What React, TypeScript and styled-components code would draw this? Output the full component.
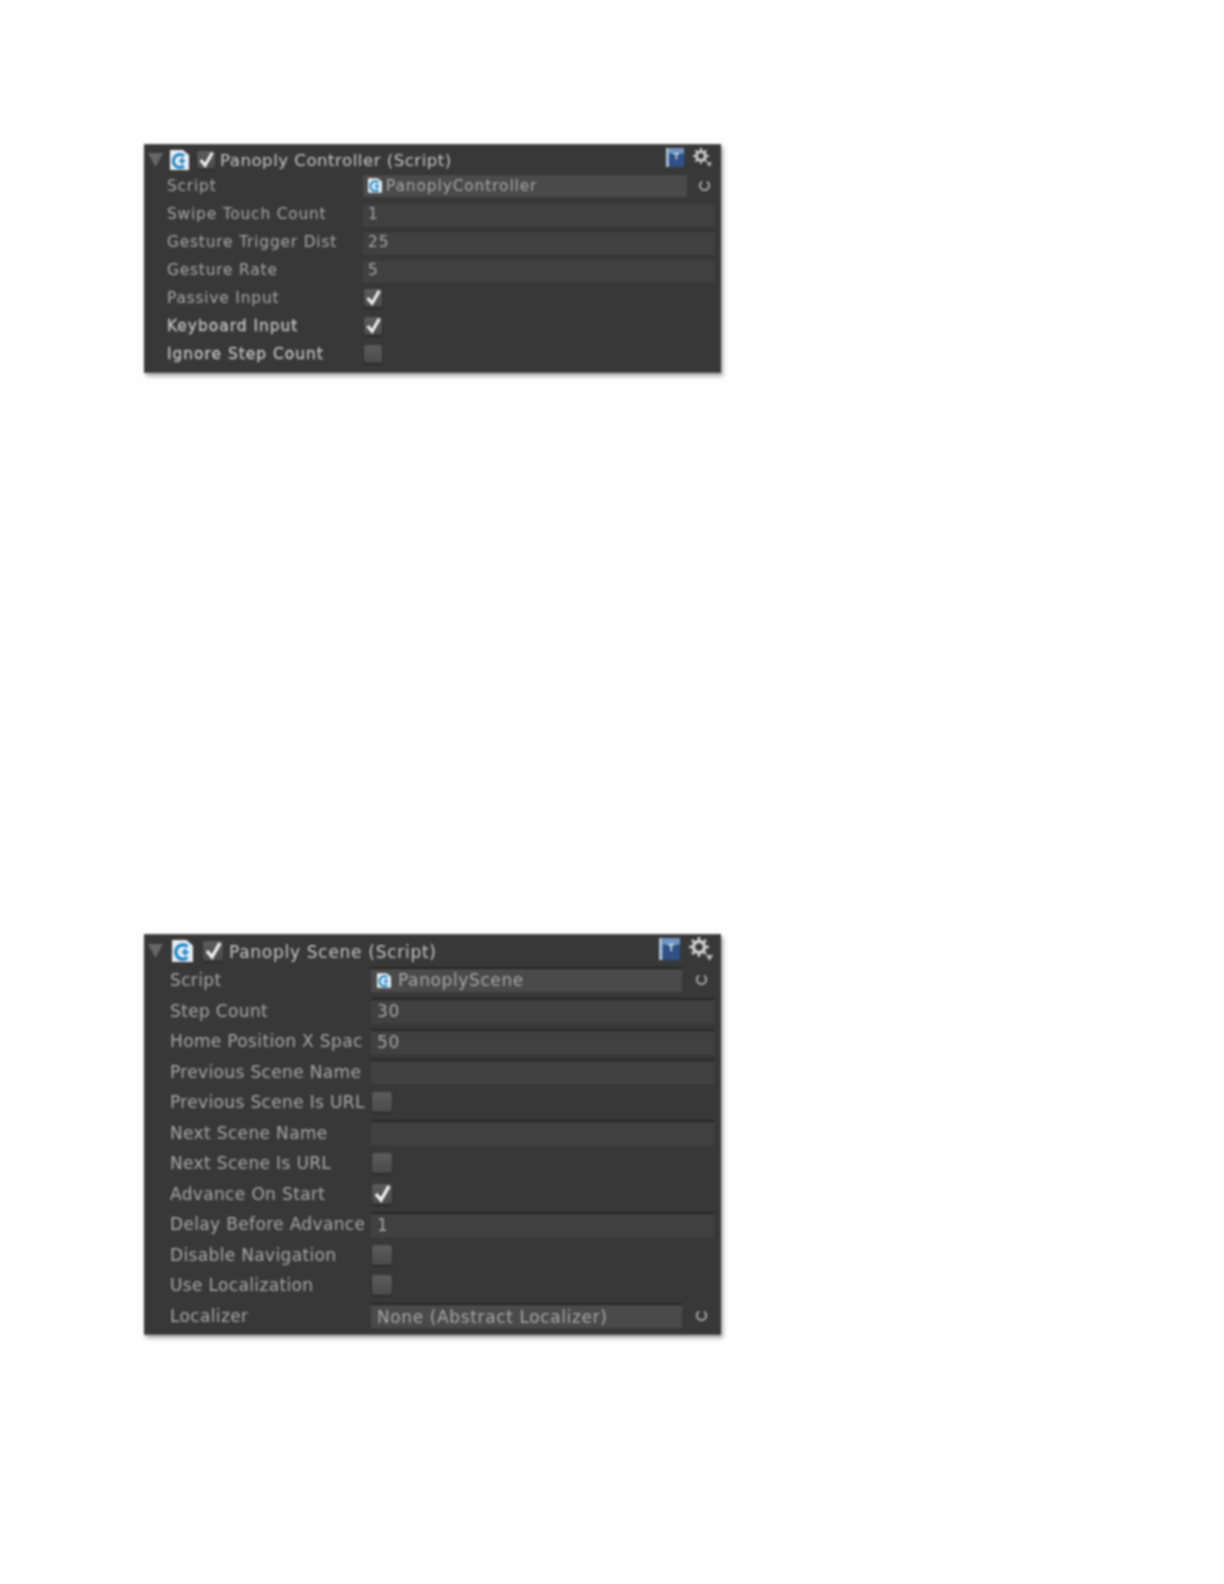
import React from "react";
import styled, { createGlobalStyle } from "styled-components";

const Global = createGlobalStyle`
  html, body { margin: 0; padding: 0; background: #fefefe; }
  #root { width: 1224px; height: 1584px; overflow: hidden; }
`;

type Size = {
  headerH: number; rowH: number; labelPad: number; labelCol: number; endPad: number;
  font: number; titleFont: number; titleSpacing: number; titleLead: number; spacing: number; boldSpacing: number;
  fieldSpacing: number; fieldH: number; fieldPad: number; objectGap: number; bottom: number;
  pickerCol: number; box: number; iconH: number; book: number; gear: number; toolGap: number; toolEnd: number;
};

const small: Size = { headerH: 28, rowH: 28, labelPad: 23, labelCol: 196, endPad: 6, font: 15.4, titleFont: 16.6, titleSpacing: 0.5, titleLead: -2, spacing: 0.82, boldSpacing: 1.02, fieldSpacing: 0.9, fieldH: 23, fieldPad: 5, objectGap: 4, bottom: 4, pickerCol: 28, box: 18, iconH: 20, book: 19, gear: 19, toolGap: 9, toolEnd: 9 };
const large: Size = { headerH: 31, rowH: 30.5, labelPad: 26, labelCol: 201, endPad: 7, font: 17, titleFont: 17, titleSpacing: 0.72, titleLead: -3, spacing: 0.35, boldSpacing: 0.35, fieldSpacing: 0.62, fieldH: 25, fieldPad: 6, objectGap: 7, bottom: 3, pickerCol: 32, box: 20, iconH: 22, book: 22, gear: 24, toolGap: 9, toolEnd: 8 };

const Page = styled.main`
  display: flex;
  flex-direction: column;
  padding: 144px 0 0 144px;
  gap: 561px;
`;

const Panel = styled.section<{ $s: Size }>`
  width: 577px;
  box-sizing: border-box;
  padding-bottom: ${(p) => p.$s.bottom}px;
  background: #383838;
  border-top: 1px solid #505050;
  border-bottom: 1px solid #555;
  box-shadow: 2px 3px 4px rgba(0, 0, 0, 0.35);
  font-family: "DejaVu Sans", "Liberation Sans", sans-serif;
  filter: blur(0.9px);
`;

const Header = styled.header<{ $s: Size }>`
  display: flex;
  align-items: center;
  height: ${(p) => p.$s.headerH - 1}px;
  padding: 2px ${(p) => p.$s.toolEnd}px 0 4px;
  box-sizing: border-box;
  gap: ${(p) => (p.$s === small ? 7 : 9)}px;
`;

const Title = styled.h2<{ $s: Size }>`
  flex: 1;
  margin: 1px 0 0 ${(p) => p.$s.titleLead}px;
  font-size: ${(p) => p.$s.titleFont}px;
  font-weight: 400;
  letter-spacing: ${(p) => p.$s.titleSpacing}px;
  color: #c6c6c6;
  white-space: nowrap;
`;

const HeaderTools = styled.div<{ $s: Size }>`
  display: flex;
  align-items: center;
  gap: ${(p) => p.$s.toolGap}px;
  margin-top: -4px;
`;

const Row = styled.div<{ $s: Size }>`
  display: grid;
  grid-template-columns: ${(p) => p.$s.labelCol}px 1fr;
  align-items: center;
  height: ${(p) => p.$s.rowH}px;
  padding: 0 ${(p) => p.$s.endPad}px 0 ${(p) => p.$s.labelPad}px;
`;

const Label = styled.span<{ $s: Size; $bold?: boolean }>`
  white-space: nowrap;
  font-size: ${(p) => p.$s.font}px;
  letter-spacing: ${(p) => (p.$bold ? p.$s.boldSpacing : p.$s.spacing)}px;
  color: ${(p) => (p.$bold ? "#c4c4c4" : "#a8a8a8")};
  -webkit-text-stroke: ${(p) => (p.$bold ? "0.3px #c4c4c4" : "0")};
`;

const Field = styled.div<{ $s: Size }>`
  display: flex;
  align-items: center;
  height: ${(p) => p.$s.fieldH}px;
  box-sizing: border-box;
  padding-left: ${(p) => p.$s.fieldPad}px;
  background: #404040;
  border-top: ${(p) => (p.$s === large ? "2px solid #252525" : "1px solid #343434")};
  border-bottom: 1px solid #464646;
  font-size: ${(p) => p.$s.font}px;
  letter-spacing: ${(p) => p.$s.fieldSpacing}px;
  color: #a8a8a8;
  white-space: nowrap;
`;

const ObjectLine = styled.div<{ $s: Size; $raised?: boolean }>`
  display: grid;
  grid-template-columns: 1fr ${(p) => p.$s.pickerCol}px;
  align-items: center;
  margin-top: ${(p) => (p.$raised ? -2 : 0)}px;
`;

const ObjectField = styled(Field)`
  gap: ${(p) => p.$s.objectGap}px;
  background: #4a4a4a;
  border-bottom: none;
`;

const PickerCell = styled.div`
  display: flex;
  justify-content: center;
  padding-left: 6px;
`;

const Box = styled.div<{ $s: Size }>`
  display: flex;
  align-items: center;
  justify-content: center;
  width: ${(p) => p.$s.box}px;
  height: ${(p) => p.$s.box}px;
  margin-left: 1px;
  border-radius: 3px;
  background: linear-gradient(#5c5c5c, #4a4a4a);
  box-shadow: 0 1px 2px rgba(0, 0, 0, 0.5);
`;

const Check = ({ size }: { size: number }) => (
  <svg width={size} height={size} viewBox="0 0 20 20">
    <path d="M4 10l5 6L17 2" fill="none" stroke="#f2f2f2" strokeWidth="3.4" />
  </svg>
);

const Foldout = () => (
  <svg width="15" height="14" viewBox="0 0 15 14">
    <path d="M0 0h15L7.5 14z" fill="#666" />
  </svg>
);

const ScriptIcon = ({ h }: { h: number }) => (
  <svg width={h - 1} height={h} viewBox="0 0 19 20">
    <path d="M0 0h13l6 5v15H0z" fill="#e8eef2" />
    <path d="M14 6A6.5 6.5 0 1 0 14 16" fill="none" stroke="#1e86c8" strokeWidth="3" />
    <path d="M9 11h6M12 8v6" stroke="#1e86c8" strokeWidth="2" />
  </svg>
);

const BookIcon = ({ h }: { h: number }) => (
  <svg width={h - 1} height={h} viewBox="0 0 19 20">
    <path d="M0 0h19v20H0z" fill="#2f5186" />
    <path d="M0 0h3v20H0z" fill="#a9c4e0" />
    <path d="M3 0h16v6H3z" fill="#6f95c4" />
    <path d="M8 6h6M11 6v6" stroke="#cfe0f0" strokeWidth="1.5" />
  </svg>
);

const GearIcon = ({ w }: { w: number }) => (
  <svg width={w} height={w} viewBox="0 0 24 24">
    <circle cx="10" cy="10" r="5.5" fill="none" stroke="#cfcfcf" strokeWidth="3.5" />
    <path d="M10 0v4M10 16v4M0 10h4M16 10h4M3 3l3 3M14 14l3 3M17 3l-3 3M6 14l-3 3" stroke="#cfcfcf" strokeWidth="2.5" />
    <path d="M17 18h7l-3.500 6z" fill="#bdbdbd" />
  </svg>
);

const PickerIcon = () => (
  <svg width="13" height="13" viewBox="0 0 13 13">
    <path d="M4 2.500A4.700 4.700 0 1 0 9 2.500" fill="none" stroke="#b5b5b5" strokeWidth="1.700" />
  </svg>
);

type Item =
  | { kind: "object"; label: string; value: string; icon?: boolean; bold?: boolean }
  | { kind: "text"; label: string; value: string; bold?: boolean }
  | { kind: "check"; label: string; on: boolean; bold?: boolean };

const controller: Item[] = [
  { kind: "object", label: "Script", value: "PanoplyController", icon: true },
  { kind: "text", label: "Swipe Touch Count", value: "1" },
  { kind: "text", label: "Gesture Trigger Dist", value: "25" },
  { kind: "text", label: "Gesture Rate", value: "5" },
  { kind: "check", label: "Passive Input", on: true },
  { kind: "check", label: "Keyboard Input", on: true, bold: true },
  { kind: "check", label: "Ignore Step Count", on: false, bold: true },
];

const scene: Item[] = [
  { kind: "object", label: "Script", value: "PanoplyScene", icon: true },
  { kind: "text", label: "Step Count", value: "30" },
  { kind: "text", label: "Home Position X Spac", value: "50" },
  { kind: "text", label: "Previous Scene Name", value: "" },
  { kind: "check", label: "Previous Scene Is URL", on: false },
  { kind: "text", label: "Next Scene Name", value: "" },
  { kind: "check", label: "Next Scene Is URL", on: false },
  { kind: "check", label: "Advance On Start", on: true },
  { kind: "text", label: "Delay Before Advance", value: "1" },
  { kind: "check", label: "Disable Navigation", on: false },
  { kind: "check", label: "Use Localization", on: false },
  { kind: "object", label: "Localizer", value: "None (Abstract Localizer)" },
];

const Inspector = ({ title, items, s }: { title: string; items: Item[]; s: Size }) => (
  <Panel $s={s}>
    <Header $s={s}>
      <Foldout />
      <ScriptIcon h={s.iconH} />
      <Box $s={s}><Check size={s.box} /></Box>
      <Title $s={s}>{title}</Title>
      <HeaderTools $s={s}>
        <BookIcon h={s.book} />
        <GearIcon w={s.gear} />
      </HeaderTools>
    </Header>
    {items.map((it) => (
      <Row $s={s} key={it.label}>
        <Label $s={s} $bold={it.bold}>{it.label}</Label>
        {it.kind === "text" && <Field $s={s}>{it.value}</Field>}
        {it.kind === "check" && (
          <Box $s={s}>{it.on && <Check size={s.box} />}</Box>
        )}
        {it.kind === "object" && (
          <ObjectLine $s={s} $raised={it.icon}>
            <ObjectField $s={s}>
              {it.icon && <ScriptIcon h={15} />}
              {it.value}
            </ObjectField>
            <PickerCell><PickerIcon /></PickerCell>
          </ObjectLine>
        )}
      </Row>
    ))}
  </Panel>
);

export default function App() {
  return (
    <>
      <Global />
      <Page>
        <Inspector title="Panoply Controller (Script)" items={controller} s={small} />
        <Inspector title="Panoply Scene (Script)" items={scene} s={large} />
      </Page>
    </>
  );
}
